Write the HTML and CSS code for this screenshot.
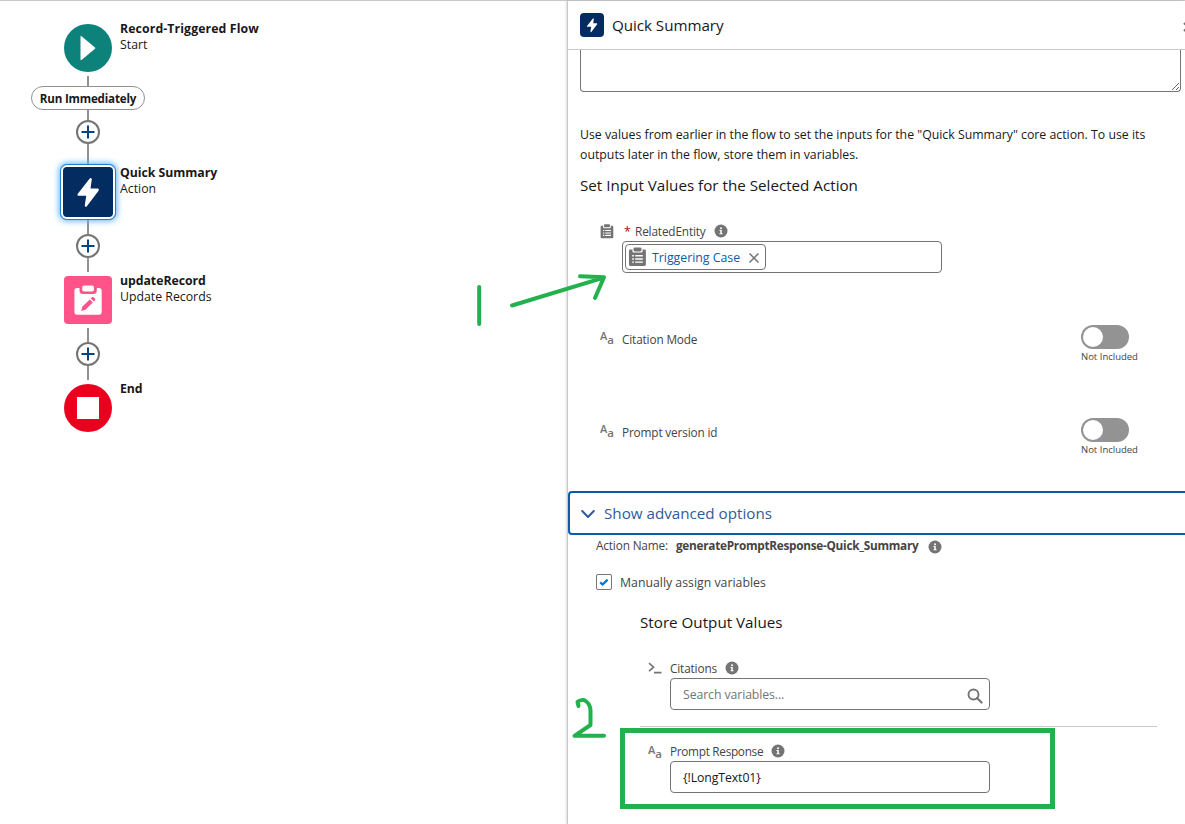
FILE: index.html
```html
<!DOCTYPE html>
<html lang="en">
<head>
    <meta charset="UTF-8">
    <meta name="viewport" content="width=device-width, initial-scale=1.0">
    <title>Quick Summary - Flow Builder</title>
    <link rel="stylesheet" href="styles.css">
</head>
<body>
    <!-- Shared icons -->
    <svg class="sprite" xmlns="http://www.w3.org/2000/svg">
        <symbol id="bolt" viewBox="0 0 52 52">
            <path d="M27.6 15.2 L15.2 31 Q14.6 32.6 16 32.8 H24.2 L22.6 43.4 Q23.4 45.6 25 43.6 L37.2 27.4 Q37.6 25.6 36.2 25.4 H28.6 L30 15.6 Q29 13.6 27.6 15.2 Z" transform="translate(0 -3)" fill="#fff"/>
        </symbol>
        <symbol id="clipboard" viewBox="0 0 14 15">
            <rect x="4" y="0.3" width="6" height="3" rx="1"/>
            <path fill-rule="evenodd" d="M1.6 1.8 H3.2 V3.2 Q3.2 4.2 4.2 4.2 H9.8 Q10.8 4.2 10.8 3.2 V1.8 H12.2 Q13.3 1.8 13.3 2.9 V13.2 Q13.3 14.3 12.2 14.3 H1.6 Q0.6 14.3 0.6 13.2 V2.9 Q0.6 1.8 1.6 1.8 Z M3 6 V7.1 H4.3 V6 Z M5.3 6 V7.1 H11 V6 Z M3 8.4 V9.5 H4.3 V8.4 Z M5.3 8.4 V9.5 H11 V8.4 Z M3 10.8 V11.9 H4.3 V10.8 Z M5.3 10.8 V11.9 H11 V10.8 Z"/>
        </symbol>
        <symbol id="info" viewBox="0 0 14 14">
            <circle cx="7" cy="7" r="6.5"/>
            <circle cx="7" cy="4.3" r="1" fill="#fff"/>
            <path d="M5.5 6 H7.8 V9.2 H8.6 V10.3 H5.5 V9.2 H6.3 V7 H5.5 Z" fill="#fff"/>
        </symbol>
        <symbol id="plus" viewBox="0 0 20 20">
            <path d="M10 3.5 V16.5 M3.5 10 H16.5" stroke="#014486" stroke-width="2" fill="none"/>
        </symbol>
    </svg>

    <div class="builder">
        <main class="canvas">
            <div class="node">
                <div class="node-icon start">
                    <svg viewBox="0 0 48 48"><path d="M16.5 12.8 V35.4 Q16.7 36.6 17.8 35.8 L31 24.8 Q31.6 24.1 31 23.4 L17.8 12.4 Q16.7 11.6 16.5 12.8 Z" fill="#fff"/></svg>
                </div>
                <div class="node-text">
                    <strong class="trigger-name">Record-Triggered Flow</strong>
                    <span>Start</span>
                </div>
            </div>
            <div class="line first"></div>
            <div class="path-label">Run Immediately</div>
            <div class="line"></div>
            <div class="add"><svg><use href="#plus"/></svg></div>
            <div class="line long"></div>

            <div class="node selected">
                <div class="node-icon action"><svg><use href="#bolt"/></svg></div>
                <div class="node-text">
                    <strong>Quick Summary</strong>
                    <span>Action</span>
                </div>
            </div>
            <div class="line mid"></div>
            <div class="add"><svg><use href="#plus"/></svg></div>
            <div class="line mid"></div>

            <div class="node spaced">
                <div class="node-icon update">
                    <svg viewBox="0 0 48 48">
                        <rect x="18.2" y="9.6" width="11.8" height="6" rx="2" fill="#fff"/>
                        <path d="M13 12 H15.5 V14.5 Q15.5 18 19 18 H29.3 Q32.8 18 32.8 14.5 V12 H35 Q37.7 12 37.7 14.7 V36 Q37.7 38.7 35 38.7 H13 Q10.4 38.7 10.4 36 V14.7 Q10.4 12 13 12 Z" fill="#fff"/>
                        <path d="M17.2 35 L18.4 30.6 L25.8 23.4 L28.8 26.4 L21.5 33.7 Z M26.8 22.4 L28 21.3 Q28.9 20.6 29.8 21.4 L31 22.6 Q31.7 23.4 31 24.3 L29.8 25.4 Z" fill="#ff538a"/>
                    </svg>
                </div>
                <div class="node-text">
                    <strong>updateRecord</strong>
                    <span>Update Records</span>
                </div>
            </div>
            <div class="line mid"></div>
            <div class="add"><svg><use href="#plus"/></svg></div>
            <div class="line mid"></div>

            <div class="node spaced">
                <div class="node-icon end"><div class="stop"></div></div>
                <div class="node-text"><strong>End</strong></div>
            </div>
        </main>

        <aside class="panel">
            <header class="panel-header">
                <div class="panel-icon"><svg><use href="#bolt"/></svg></div>
                <h1>Quick Summary</h1>
                <svg class="close" viewBox="0 0 10 10"><path d="M1 1 L9 9 M9 1 L1 9" stroke="#747474" stroke-width="2"/></svg>
            </header>

            <div class="panel-body">
                <textarea class="description"></textarea>
                <p class="help">Use values from earlier in the flow to set the inputs for the "Quick Summary" core action. To use its<br>outputs later in the flow, store them in variables.</p>
                <h2 class="inputs-title">Set Input Values for the Selected Action</h2>

                <div class="field related">
                    <svg class="type-icon"><use href="#clipboard"/></svg>
                    <div class="field-main">
                        <div class="label-row">
                            <abbr class="required">*</abbr>
                            <span class="label">RelatedEntity</span>
                            <svg class="info"><use href="#info"/></svg>
                        </div>
                        <div class="input">
                            <div class="pill">
                                <svg class="pill-icon"><use href="#clipboard"/></svg>
                                <span>Triggering Case</span>
                                <svg class="remove" viewBox="0 0 10 10"><path d="M0.5 0.5 L9.5 9.5 M9.5 0.5 L0.5 9.5" stroke="#747474" stroke-width="1.5"/></svg>
                            </div>
                        </div>
                    </div>
                </div>

                <div class="optional">
                    <span class="text-type">A<sub>a</sub></span>
                    <span class="label">Citation Mode</span>
                    <div class="toggle">
                        <div class="track"><div class="thumb"></div></div>
                        <small>Not Included</small>
                    </div>
                </div>
                <div class="optional">
                    <span class="text-type">A<sub>a</sub></span>
                    <span class="label">Prompt version id</span>
                    <div class="toggle">
                        <div class="track"><div class="thumb"></div></div>
                        <small>Not Included</small>
                    </div>
                </div>

                <div class="advanced">
                    <svg viewBox="0 0 14 10"><path d="M1.2 2 L7 8 L12.8 2" fill="none" stroke="#2f5b9a" stroke-width="2" stroke-linecap="round" stroke-linejoin="round"/></svg>
                    <span>Show advanced options</span>
                </div>

                <div class="action-name">
                    <span class="label">Action Name:</span>
                    <strong>generatePromptResponse-Quick_Summary</strong>
                    <svg class="info"><use href="#info"/></svg>
                </div>

                <div class="manual">
                    <div class="checkbox">
                        <svg viewBox="0 0 14 14"><path d="M3.2 7.4 L5.6 9.6 L10.6 4.6" fill="none" stroke="#0176d3" stroke-width="2.2"/></svg>
                    </div>
                    <span>Manually assign variables</span>
                </div>

                <section class="outputs">
                    <h2>Store Output Values</h2>
                    <div class="output">
                        <svg class="prompt-type" viewBox="0 0 14 14"><path d="M1 2.2 L5.6 6.2 L1 10.2 M6 11.6 H13.5" fill="none" stroke="#747474" stroke-width="1.6"/></svg>
                        <div class="field-main">
                            <div class="label-row">
                                <span class="label">Citations</span>
                                <svg class="info"><use href="#info"/></svg>
                            </div>
                            <div class="input text">
                                <span class="placeholder">Search variables...</span>
                                <svg class="search" viewBox="0 0 16 16"><circle cx="6.5" cy="6.5" r="5" fill="none" stroke="#747474" stroke-width="1.9"/><path d="M10 10 L14.6 14.6" stroke="#747474" stroke-width="2.1" stroke-linecap="round"/></svg>
                            </div>
                        </div>
                    </div>
                    <hr>
                    <div class="output">
                        <span class="text-type">A<sub>a</sub></span>
                        <div class="field-main">
                            <div class="label-row">
                                <span class="label tight">Prompt Response</span>
                                <svg class="info"><use href="#info"/></svg>
                            </div>
                            <div class="input text">
                                <span class="value">{!LongText01}</span>
                            </div>
                        </div>
                    </div>
                </section>
            </div>
        </aside>
    </div>

    <!-- Hand-drawn step marks -->
    <svg class="marks" viewBox="0 0 1185 824">
        <path d="M479.2 287 V324"/>
        <path d="M512 305.5 L603 277.8 M580 276.3 L604 277.3 L595 298"/>
        <path d="M578.5 706 L577.5 702 Q580 699.5 584 700 Q590.5 703 590.5 711 V725 L574.5 735.8 H604"/>
    </svg>
    <div class="highlight"></div>
</body>
</html>
```

FILE: styles.css
```css
:root {
    --text: #181818;
    --label: #444444;
    --gray: #747474;
    --border: #c9c9c9;
    --navy: #032d60;
    --link: #0b5cab;
    --mark: #22b14c;
}

* {
    margin: 0;
    padding: 0;
    box-sizing: border-box;
}

body {
    font-family: "Segoe UI", "Open Sans", "Noto Sans", sans-serif;
    font-size: 12.3px;
    color: var(--text);
    background: #fff;
    height: 100vh;
    overflow: hidden;
}

svg {
    display: block;
    flex: none;
}

.sprite {
    position: absolute;
    width: 0;
    height: 0;
}

.builder {
    display: flex;
    height: 824px;
    border-top: 1px solid var(--border);
}

/* Flow canvas */
.canvas {
    width: 567px;
    flex: none;
    padding: 23px 0 0 64px;
}

.node {
    display: flex;
    gap: 8px;
    height: 48px;
}

.node.selected {
    margin: 8px 0 4px;
}

.node.spaced {
    margin: 4px 0;
}

.node-icon {
    width: 48px;
    height: 48px;
    flex: none;
    display: grid;
    place-items: center;
    border-radius: 4px;
}

.node-icon svg {
    width: 48px;
    height: 48px;
}

.start {
    background: #0d827b;
    border-radius: 50%;
}

.node-icon.action {
    width: 50px;
    height: 50px;
    margin: -1px;
    background: var(--navy);
    border-radius: 4px;
    box-shadow: 0 0 0 2px #fff, 0 0 0 3px #1b7fd8, 0 0 6px 4px #5fb2f5;
}

.node-icon.action svg {
    width: 50px;
    height: 50px;
}

.update {
    background: #ff538a;
}

.end {
    background: #ea001e;
    border-radius: 50%;
}

.stop {
    width: 22px;
    height: 22px;
    background: #fff;
}

.node-text {
    display: flex;
    flex-direction: column;
    margin-top: -3px;
    line-height: 16px;
    white-space: nowrap;
}

.node-text strong {
    letter-spacing: -0.05px;
}

.node-text .trigger-name {
    letter-spacing: 0.1px;
}

.line {
    width: 2px;
    height: 10px;
    margin-left: 23px;
    background: #919191;
}

.line.first {
    margin-top: 4px;
}

.line.mid {
    height: 14px;
}

.line.long {
    height: 20px;
    margin-bottom: -4px;
}

.path-label {
    width: 114px;
    height: 24px;
    margin-left: -33px;
    border: 1px solid #919191;
    border-radius: 12px;
    font-size: 11.6px;
    font-weight: 700;
    line-height: 23px;
    text-align: center;
    letter-spacing: -0.2px;
    white-space: nowrap;
}

.add {
    width: 24px;
    height: 24px;
    margin-left: 12px;
    border: 2px solid var(--gray);
    border-radius: 50%;
}

.add svg {
    width: 20px;
    height: 20px;
}

/* Property panel */
.panel {
    width: 618px;
    flex: none;
    border-left: 1px solid var(--border);
    box-shadow: -1px 0 2px rgba(0, 0, 0, 0.14);
    overflow: hidden;
}

.panel-header {
    display: flex;
    align-items: center;
    height: 49px;
    padding-left: 12px;
    border-bottom: 1px solid var(--border);
}

.panel-icon {
    width: 24px;
    height: 24px;
    border-radius: 4px;
    background: var(--navy);
}

.panel-icon svg {
    width: 24px;
    height: 24px;
}

h1,
h2 {
    font-size: 15.2px;
    font-weight: 400;
    white-space: nowrap;
}

h1 {
    margin-left: 8px;
    letter-spacing: -0.05px;
}

.close {
    width: 10px;
    height: 10px;
    margin: 4px -8px 0 auto;
}

.panel-body {
    padding-left: 12px;
}

.description {
    display: block;
    width: 601px;
    height: 42px;
    border: 1px solid var(--gray);
    border-top: 0;
    border-radius: 0 0 4px 4px;
    background: #fff;
}

.help {
    margin-top: 33px;
    line-height: 20px;
    white-space: nowrap;
}

.inputs-title {
    margin-top: 9px;
    line-height: 22px;
}

.label {
    font-size: 11.8px;
    color: var(--label);
    letter-spacing: -0.15px;
    white-space: nowrap;
}

.label.tight {
    letter-spacing: -0.3px;
}

.info {
    width: 14px;
    height: 14px;
    fill: var(--gray);
}

.field {
    display: flex;
    padding: 26px 0 0 20px;
    gap: 8px;
}

.type-icon {
    width: 14px;
    height: 15px;
    margin-top: 2px;
    fill: var(--gray);
}

.label-row {
    display: flex;
    align-items: center;
    height: 16px;
    margin-bottom: 2px;
    gap: 8px;
}

.required {
    width: 5px;
    margin: 0 -2px 0 2px;
    color: #ba0517;
    text-decoration: none;
}

.input {
    display: flex;
    align-items: center;
    width: 320px;
    height: 32px;
    border: 1px solid var(--gray);
    border-radius: 4px;
}

.input.text {
    padding: 0 6px 0 12px;
    justify-content: space-between;
}

.placeholder,
.value {
    letter-spacing: -0.1px;
}

.pill {
    display: flex;
    align-items: center;
    width: 141px;
    height: 26px;
    margin-left: 2px;
    padding-left: 2px;
    border: 1px solid var(--gray);
    border-radius: 4px;
    color: var(--link);
    white-space: nowrap;
}

.pill-icon {
    width: 19px;
    height: 20px;
    margin-right: 5px;
    fill: var(--gray);
}

.remove {
    width: 10px;
    height: 10px;
    margin: 1px 6px 0 auto;
}

.related {
    height: 96px;
}

.related .field-main {
    padding-top: 1px;
}

.optional {
    display: flex;
    height: 93px;
    padding: 29px 46px 0 20px;
}

.text-type {
    width: 22px;
    font-size: 11px;
    font-weight: 600;
    line-height: 14px;
    color: var(--gray);
}

.text-type sub {
    font-size: 11.5px;
    line-height: 0;
    vertical-align: -4px;
}

.optional .text-type {
    margin-top: 8px;
}

.optional .label {
    margin-top: 9px;
    line-height: 18px;
}

.toggle {
    width: 58px;
    margin-left: auto;
    margin-top: 4px;
}

.track {
    width: 48px;
    height: 24px;
    padding: 2px;
    border-radius: 12px;
    background: #939393;
}

.thumb {
    width: 20px;
    height: 20px;
    border-radius: 50%;
    background: #fff;
}

.toggle small {
    display: block;
    font-size: 9.5px;
    line-height: 15px;
    color: var(--label);
    white-space: nowrap;
}

.advanced {
    display: flex;
    align-items: center;
    height: 44px;
    margin: 13px -6px 0 -12px;
    padding-left: 11px;
    border: 2px solid var(--link);
    border-radius: 4px;
    font-size: 15.2px;
    color: #2f5b9a;
}

.advanced svg {
    width: 14px;
    height: 10px;
    margin: 2px 9px 0 0;
}

.action-name {
    display: flex;
    align-items: center;
    height: 20px;
    padding-left: 16px;
    color: var(--label);
}

.action-name strong {
    margin-left: 8px;
    font-size: 11.8px;
    letter-spacing: -0.28px;
}

.action-name .info {
    margin: 4px 0 0 10px;
}

.manual {
    display: flex;
    align-items: center;
    margin-top: 17px;
    height: 20px;
    padding-left: 16px;
    gap: 8px;
    color: var(--label);
}

.checkbox {
    width: 16px;
    height: 16px;
    border: 1px solid var(--gray);
    border-radius: 2px;
}

.outputs {
    width: 577px;
    padding-left: 60px;
}

.outputs h2 {
    margin-top: 19px;
    line-height: 22px;
}

.output {
    display: flex;
    padding-left: 8px;
}

.output .text-type {
    margin-top: 2px;
}

.outputs h2 + .output {
    margin-top: 25px;
}

.prompt-type {
    width: 14px;
    height: 14px;
    margin: 3px 8px 0 0;
}

.outputs .label-row {
    height: 20px;
    margin-bottom: 0;
}

.placeholder {
    color: var(--gray);
}

.search {
    width: 16px;
    height: 16px;
    margin-top: 3px;
}

hr {
    margin: 16px 0 14px;
    border: 0;
    border-top: 1px solid var(--border);
}

/* Marks drawn over the screen */
.marks {
    position: absolute;
    top: 0;
    left: 0;
    width: 1185px;
    height: 824px;
    fill: none;
    stroke: var(--mark);
    stroke-width: 4;
    stroke-linecap: round;
    stroke-linejoin: round;
    pointer-events: none;
}

.highlight {
    position: absolute;
    top: 728px;
    left: 620px;
    width: 435px;
    height: 81px;
    border: 5px solid var(--mark);
    pointer-events: none;
}
```
